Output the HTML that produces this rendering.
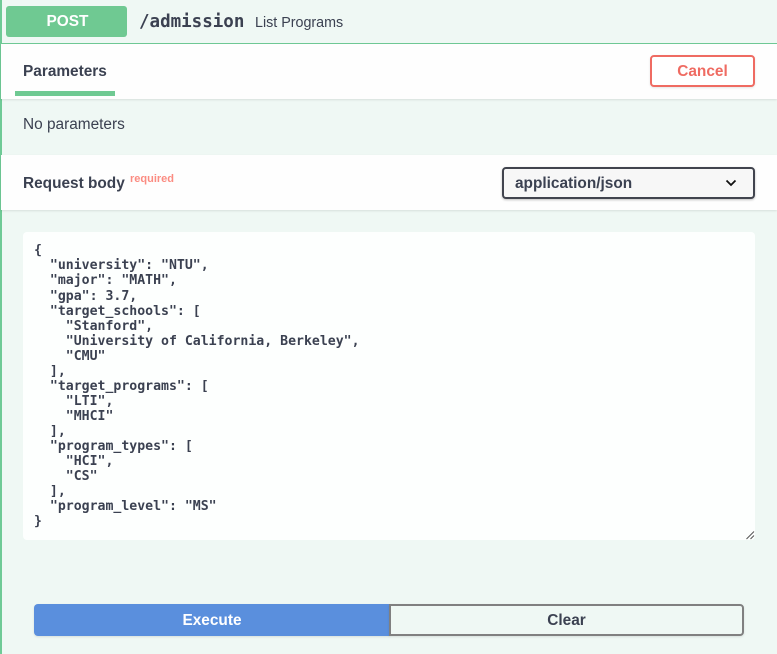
<!DOCTYPE html>
<html>
<head>
<meta charset="utf-8">
<style>
html,body{margin:0;padding:0;width:777px;height:654px;overflow:hidden;background:#eff8f4;}
body{position:relative;font-family:"Liberation Sans",sans-serif;color:#3b4151;}
.a{position:absolute;white-space:nowrap;}
.b{position:absolute;box-sizing:border-box;}
pre.a{margin:0;white-space:pre;font-family:"DejaVu Sans Mono",monospace;font-weight:bold;font-size:13.2px;line-height:15.06px;color:#3b4151;}
</style>
</head>
<body>
<div class="b" style="left:0;top:0;width:2px;height:654px;background:#6fca96;"></div>
<div class="b" style="left:6px;top:6px;width:121px;height:31px;background:#6fc992;border-radius:3px;"></div>
<div class="a" style="left:7px;top:6px;width:121px;height:31px;line-height:32px;text-align:center;color:#fff;font-weight:bold;font-size:15.4px;">POST</div>
<div class="a" style="left:139px;top:12px;font-family:'DejaVu Sans Mono',monospace;font-weight:bold;font-size:17.5px;line-height:21px;">/admission</div>
<div class="a" style="left:255px;top:15px;font-size:14.3px;line-height:16px;">List Programs</div>
<div class="b" style="left:0;top:43px;width:777px;height:1px;background:#6fca96;"></div>

<div class="b" style="left:1px;top:44px;width:776px;height:55px;background:#fefefe;box-shadow:0 1px 2px rgba(0,0,0,.1);"></div>
<div class="a" style="left:23px;top:64px;font-weight:bold;font-size:15.4px;line-height:16px;">Parameters</div>
<div class="b" style="left:15px;top:91px;width:100px;height:5px;background:#6fc992;"></div>
<div class="b" style="left:650px;top:55px;width:105px;height:32px;border:2px solid #ef6b62;border-radius:4px;background:#fff;box-shadow:0 1px 2px rgba(0,0,0,.1);text-align:center;line-height:30px;color:#ef6b62;font-weight:bold;font-size:15.4px;">Cancel</div>

<div class="a" style="left:23px;top:117px;font-size:15.4px;line-height:16px;">No parameters</div>

<div class="b" style="left:1px;top:155px;width:776px;height:55px;background:#fefefe;box-shadow:0 1px 2px rgba(0,0,0,.1);"></div>
<div class="a" style="left:23px;top:176px;font-weight:bold;font-size:15.4px;line-height:16px;">Request body</div>
<div class="a" style="left:130px;top:173px;font-weight:bold;font-size:11px;line-height:12px;color:#fb8c82;">required</div>
<div class="b" style="left:502px;top:167px;width:253px;height:32px;border:2px solid #41444e;border-radius:4px;background:#f7f7f7;box-shadow:0 1px 2px rgba(0,0,0,.25);"></div>
<div class="a" style="left:515px;top:176px;font-weight:bold;font-size:15.4px;line-height:16px;">application/json</div>
<svg class="a" style="left:725px;top:179px;" width="13" height="8" viewBox="0 0 13 8"><path d="M1.500 1.500L6 6L10.500 1.500" fill="none" stroke="#111" stroke-width="1.800"/></svg>

<div class="b" style="left:23px;top:232px;width:732px;height:308px;background:#fdfffe;border-radius:4px;"></div>
<pre class="a" style="left:34px;top:243.340px;">{
  "university": "NTU",
  "major": "MATH",
  "gpa": 3.7,
  "target_schools": [
    "Stanford",
    "University of California, Berkeley",
    "CMU"
  ],
  "target_programs": [
    "LTI",
    "MHCI"
  ],
  "program_types": [
    "HCI",
    "CS"
  ],
  "program_level": "MS"
}</pre>
<svg class="a" style="left:746px;top:531px;" width="9" height="9" viewBox="0 0 9 9"><path d="M0.500 8L8 0.500M4.500 8L8 4.500" fill="none" stroke="#555" stroke-width="1"/></svg>

<div class="b" style="left:34px;top:604px;width:356px;height:32px;background:#5a8fdd;border-radius:4px 0 0 4px;box-shadow:0 1px 2px rgba(0,0,0,.1);text-align:center;line-height:34px;color:#fff;font-weight:bold;font-size:15.4px;">Execute</div>
<div class="b" style="left:389px;top:604px;width:355px;height:32px;border:2px solid #808080;border-radius:0 4px 4px 0;background:#eff8f4;box-shadow:0 1px 2px rgba(0,0,0,.1);text-align:center;line-height:30px;font-weight:bold;font-size:15.4px;">Clear</div>
</body>
</html>
